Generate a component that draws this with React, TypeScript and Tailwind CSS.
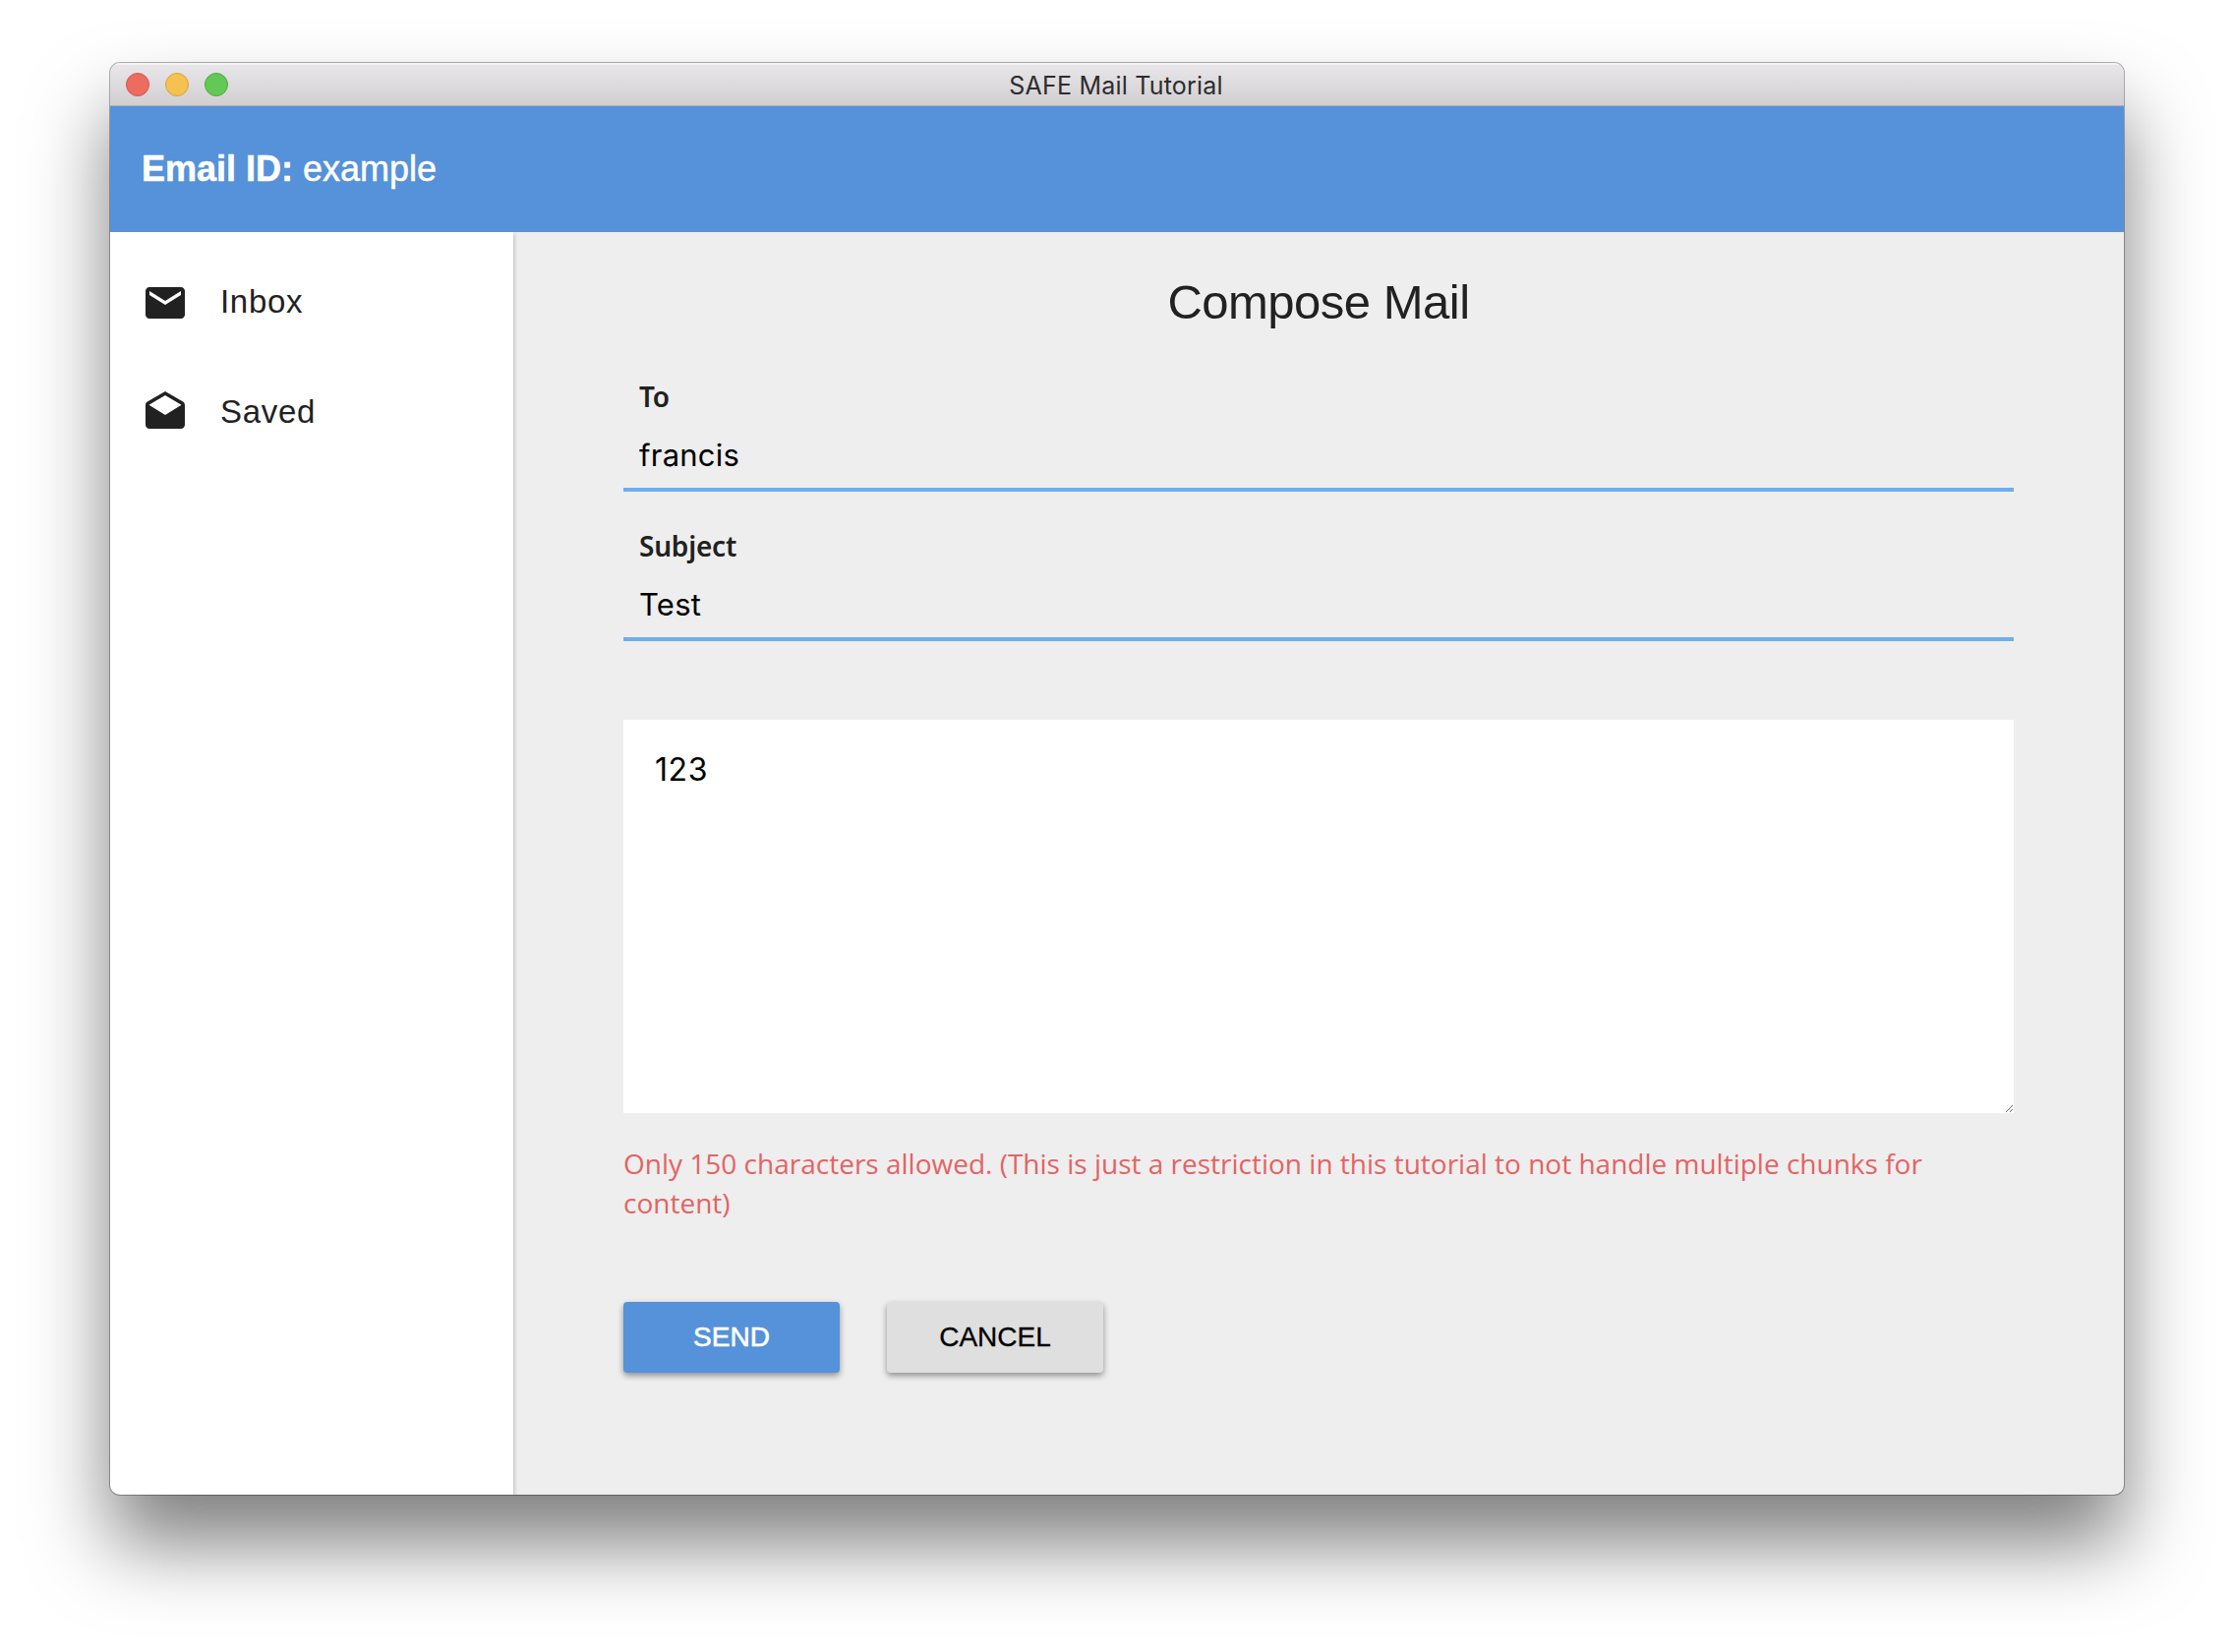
import React from "react";

function MailIcon() {
  return (
    <svg viewBox="0 0 24 24" className="size-12 fill-[#212121]">
      <path d="M20 4H4c-1.1 0-1.99.9-1.99 2L2 18c0 1.1.9 2 2 2h16c1.1 0 2-.9 2-2V6c0-1.1-.9-2-2-2zm0 4l-8 5-8-5V6l8 5 8-5v2z" />
    </svg>
  );
}

function DraftsIcon() {
  return (
    <svg viewBox="0 0 24 24" className="size-12 fill-[#212121]">
      <path d="M21.99 8c0-.72-.37-1.35-.94-1.7L12 1 2.95 6.3C2.38 6.65 2 7.28 2 8v10c0 1.1.9 2 2 2h16c1.1 0 2-.9 2-2l-.01-10zM12 13L3.74 7.84 12 3l8.26 4.84L12 13z" />
    </svg>
  );
}

function NavItem({ icon, label }: { icon: React.ReactNode; label: string }) {
  return (
    <li className="flex h-28 items-center gap-8 pl-8">
      {icon}
      <span className="pb-[3px] text-[33px] leading-10 tracking-[0.7px] text-[#212121]">{label}</span>
    </li>
  );
}

function Field({ label, value }: { label: string; value: string }) {
  return (
    <label className="flex flex-col">
      <span className="h-[42px] pl-4 font-['Noto_Sans',sans-serif] text-[28px] leading-[42px] font-semibold tracking-[-0.2px] text-[#212121]">
        {label}
      </span>
      <input
        type="text"
        defaultValue={value}
        className="h-[76px] border-b-4 border-[#6eadf0] bg-transparent px-4 pt-[5px] font-['Inter',sans-serif] text-[31px] tracking-[0.25px] text-black outline-none"
      />
    </label>
  );
}

export default function App() {
  return (
    <div className="h-[1680px] w-[2272px] overflow-hidden bg-white px-28 pt-16 font-['Liberation_Sans',Arial,sans-serif]">
      <div className="flex h-[1456px] w-[2048px] flex-col overflow-hidden rounded-[10px] bg-[#eeeeee] shadow-[0_0_0_1px_rgba(0,0,0,0.3),0_50px_80px_rgba(0,0,0,0.5)]">
        <div className="grid h-11 shrink-0 grid-cols-[1fr_auto_1fr] items-center border-t-2 border-b border-t-[#f4f3f4] border-b-[#b1afb1] bg-linear-to-b from-[#e8e6e8] to-[#d1cfd1] px-4 pb-px">
          <div className="flex gap-4">
            <span className="size-6 rounded-full border border-[#d5564b] bg-[#ed6b5f]" />
            <span className="size-6 rounded-full border border-[#d9a13b] bg-[#f5c150]" />
            <span className="size-6 rounded-full border border-[#50a83e] bg-[#62c956]" />
          </div>
          <span className="pt-0.5 pr-0.5 font-['Inter',sans-serif] text-[25px] leading-8 tracking-[0.2px] text-[#2e2c2e]">
            SAFE Mail Tutorial
          </span>
        </div>
        <header className="flex h-32 shrink-0 items-center bg-[#5592d9] px-8 text-[36px] text-white">
          <p className="leading-10 [-webkit-text-stroke:0.5px_white]">
            <b>Email ID:</b> example
          </p>
        </header>
        <div className="flex min-h-0 flex-1">
          <nav className="z-10 w-[410px] shrink-0 bg-white pt-4 shadow-[0_2px_5px_rgba(0,0,0,0.3)] [clip-path:inset(0_-10px_0_0)]">
            <ul>
              <NavItem icon={<MailIcon />} label="Inbox" />
              <NavItem icon={<DraftsIcon />} label="Saved" />
            </ul>
          </nav>
          <main className="flex flex-1 flex-col px-28 pt-[43px]">
            <h1 className="mb-[47px] text-center text-[49px] leading-[56px] tracking-[-0.5px] text-[#212121]">
              Compose Mail
            </h1>
            <div className="flex flex-col gap-[34px]">
              <Field label="To" value="francis" />
              <Field label="Subject" value="Test" />
            </div>
            <textarea
              defaultValue="123"
              className="mt-20 block h-[400px] w-full resize bg-white px-8 py-[31px] font-['Inter',sans-serif] text-[32px] leading-10 tracking-[0.6px] text-black outline-none"
            />
            <p className="mt-[31px] font-['Open_Sans',sans-serif] text-[28px] leading-10 text-[#e36464]">
              Only 150 characters allowed. (This is just a restriction in this tutorial to not handle multiple chunks for content)
            </p>
            <div className="mt-[81px] flex gap-12">
              <button className="h-[72px] w-[220px] rounded bg-[#5592d9] text-[28px] text-white shadow-[0_3px_6px_rgba(0,0,0,0.4)] [-webkit-text-stroke:0.6px_white]">
                SEND
              </button>
              <button className="h-[72px] w-[220px] rounded bg-[#dfdfdf] text-[28px] text-black shadow-[0_3px_6px_rgba(0,0,0,0.4)] [-webkit-text-stroke:0.3px_black]">
                CANCEL
              </button>
            </div>
          </main>
        </div>
      </div>
    </div>
  );
}
